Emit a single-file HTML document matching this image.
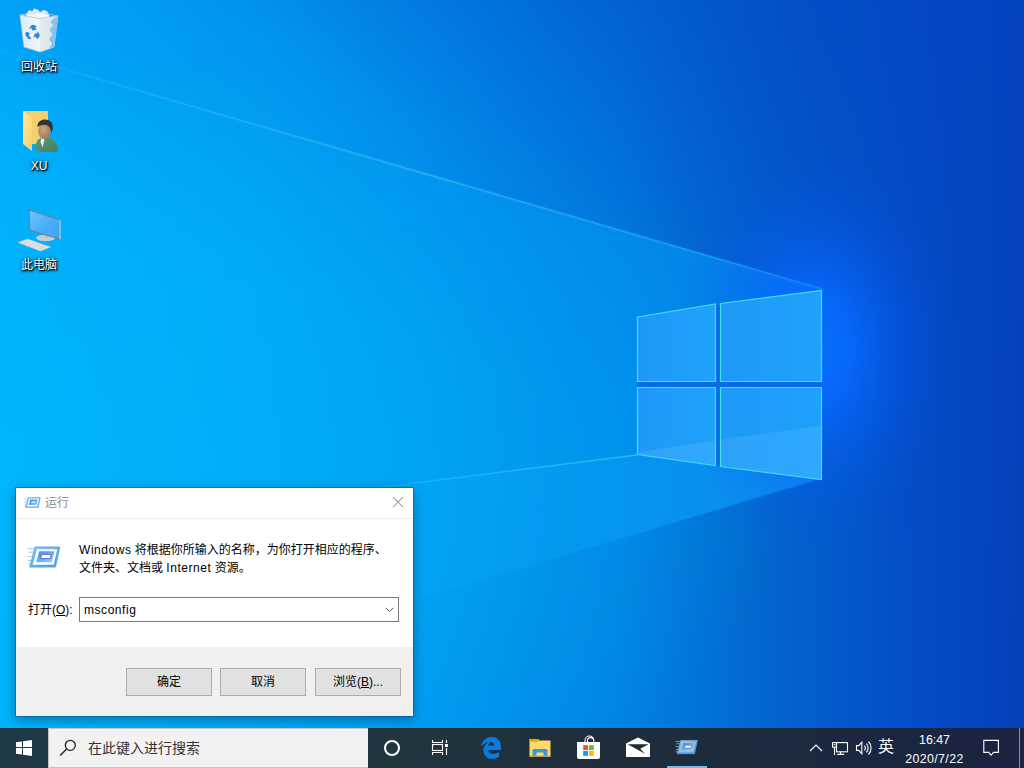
<!DOCTYPE html>
<html lang="zh-CN">
<head>
<meta charset="utf-8">
<title>桌面</title>
<style>
html,body{margin:0;padding:0;width:1024px;height:768px;overflow:hidden;background:#0078d7;}
body{position:relative;font-family:"Liberation Sans","Noto Sans CJK SC",sans-serif;font-size:12px;color:#000;}
#wall{position:absolute;left:0;top:0;width:1024px;height:768px;display:block;}
.dicon{position:absolute;left:2px;width:74px;text-align:center;color:#fff;font-size:12px;line-height:14px;text-shadow:1px 1px 0 rgba(0,0,0,.8),1px 1px 2px rgba(0,0,0,.9),0 1px 3px rgba(0,0,0,.7),0 0 4px rgba(0,0,0,.45);}
.dicon svg{display:block;margin:0 auto;}
.dicon span{display:block;}
/* dialog */
#dlg{position:absolute;left:16px;top:488px;width:397px;height:228px;background:#fff;box-shadow:0 0 0 1px rgba(0,80,150,.45),0 3px 11px rgba(0,0,0,.36);}
#dlg .title{position:absolute;left:0;top:0;width:100%;height:31px;border-bottom:1px solid #ececec;box-sizing:border-box;}
#dlg .title span{position:absolute;left:29px;top:7px;color:#8c8c8c;font-size:12px;line-height:16px;}
#dlg .foot{position:absolute;left:0;top:159px;width:100%;height:69px;background:#f0f0f0;}
.btn{position:absolute;top:180px;width:86px;height:28px;box-sizing:border-box;border:1px solid #adadad;background:#e1e1e1;text-align:center;line-height:27px;font-size:12px;}
#inp{position:absolute;left:63px;top:109px;width:320px;height:25px;box-sizing:border-box;border:1px solid #7a7a7a;background:#fff;}
#inp span{position:absolute;left:4px;top:4px;line-height:16px;font-size:12px;}
/* taskbar */
#tb{position:absolute;left:0;top:728px;width:1024px;height:40px;background:linear-gradient(90deg,#1e3846 0,#21363f 38%,#1f2e3a 58%,#1c2b3c 71%,#1b2740 83%,#1a2340 100%);}
#search{position:absolute;left:48px;top:0;width:320px;height:40px;background:#f2f2f2;box-sizing:border-box;border:1px solid #c4c4c4;border-right:none;}
#search span{position:absolute;left:39px;top:10px;font-size:14px;line-height:18px;color:#333;}
.lt{letter-spacing:.55px;}
.tray{color:#fff;position:absolute;}
</style>
</head>
<body>
<svg id="wall" viewBox="0 0 1024 768">
<defs>
<linearGradient id="g0" x1="0" y1="0" x2="1" y2="0">
<stop offset="0" stop-color="#00aafb"/>
<stop offset="0.25" stop-color="#00a1f5"/>
<stop offset="0.41" stop-color="#0096f0"/>
<stop offset="0.6" stop-color="#0084e4"/>
<stop offset="0.75" stop-color="#0365ce"/>
<stop offset="0.88" stop-color="#044ec8"/>
<stop offset="1" stop-color="#0440ba"/>
</linearGradient>
<linearGradient id="gtop" gradientUnits="userSpaceOnUse" x1="380" y1="330" x2="740" y2="-450">
<stop offset="0" stop-color="#0444c4" stop-opacity="0"/>
<stop offset="0.25" stop-color="#0444c4" stop-opacity="0.12"/>
<stop offset="0.5" stop-color="#0444c4" stop-opacity="0.5"/>
<stop offset="0.65" stop-color="#0444c4" stop-opacity="0.65"/>
<stop offset="1" stop-color="#0444c4" stop-opacity="0.7"/>
</linearGradient>
<linearGradient id="gtop2" gradientUnits="userSpaceOnUse" x1="300" y1="0" x2="1024" y2="0">
<stop offset="0" stop-color="#0444c4" stop-opacity="0"/>
<stop offset="0.414" stop-color="#0444c4" stop-opacity="0.13"/>
<stop offset="0.72" stop-color="#0444c4" stop-opacity="0.22"/>
<stop offset="0.79" stop-color="#0444c4" stop-opacity="0.08"/>
<stop offset="0.87" stop-color="#0444c4" stop-opacity="0.02"/>
<stop offset="1" stop-color="#0444c4" stop-opacity="0"/>
</linearGradient>
<linearGradient id="gcone" gradientUnits="userSpaceOnUse" x1="0" y1="0" x2="830" y2="0">
<stop offset="0" stop-color="#00b4ff" stop-opacity="0.06"/>
<stop offset="0.4" stop-color="#00a8fa" stop-opacity="0.14"/>
<stop offset="0.7" stop-color="#00a0f8" stop-opacity="0.32"/>
<stop offset="1" stop-color="#0a96ff" stop-opacity="0.72"/>
</linearGradient>
<radialGradient id="gleft" gradientUnits="userSpaceOnUse" cx="0" cy="470" r="1" gradientTransform="translate(0,470) scale(800,440) translate(0,-470)">
<stop offset="0" stop-color="#00c8ff" stop-opacity="0.40"/>
<stop offset="0.5" stop-color="#00c8ff" stop-opacity="0.27"/>
<stop offset="1" stop-color="#00c8ff" stop-opacity="0"/>
</radialGradient>
<linearGradient id="gfloor" gradientUnits="userSpaceOnUse" x1="100" y1="0" x2="830" y2="0">
<stop offset="0" stop-color="#10b0ff" stop-opacity="0.04"/>
<stop offset="0.6" stop-color="#10a8ff" stop-opacity="0.15"/>
<stop offset="1" stop-color="#20a0ff" stop-opacity="0.30"/>
</linearGradient>
<linearGradient id="gfline" gradientUnits="userSpaceOnUse" x1="200" y1="0" x2="640" y2="0">
<stop offset="0" stop-color="#50d0ff" stop-opacity="0"/>
<stop offset="1" stop-color="#50d8ff" stop-opacity="0.55"/>
</linearGradient>
<radialGradient id="gglow" gradientUnits="userSpaceOnUse" cx="812" cy="350" r="1" gradientTransform="translate(812,350) scale(140,200) translate(-812,-350)">
<stop offset="0" stop-color="#0a72ff" stop-opacity="0.95"/>
<stop offset="0.3" stop-color="#0668ff" stop-opacity="0.85"/>
<stop offset="0.55" stop-color="#0660f5" stop-opacity="0.45"/>
<stop offset="0.8" stop-color="#0658ee" stop-opacity="0.15"/>
<stop offset="1" stop-color="#0550e0" stop-opacity="0"/>
</radialGradient>
<linearGradient id="gline" gradientUnits="userSpaceOnUse" x1="0" y1="0" x2="822" y2="0"><stop offset="0" stop-color="#60c8ff" stop-opacity=".12"/><stop offset=".5" stop-color="#60c8ff" stop-opacity=".42"/><stop offset="1" stop-color="#50c0ff" stop-opacity=".22"/></linearGradient>
<linearGradient id="gpane" x1="0" y1="0" x2="1" y2="0">
<stop offset="0" stop-color="#1e98f6"/>
<stop offset="1" stop-color="#1ea2fc"/>
</linearGradient>
</defs>
<rect width="1024" height="768" fill="url(#g0)"/>
<rect width="1024" height="768" fill="url(#gtop)"/>
<rect width="1024" height="768" fill="url(#gleft)"/>
<polygon points="0,0 1024,0 1024,346 822,288 0,50" fill="url(#gtop2)"/>
<polygon points="0,50 822,288 822,478 0,724" fill="url(#gcone)"/>
<polygon points="0,535 637,455 822,479 0,724" fill="url(#gfloor)"/>
<line x1="200" y1="510" x2="637" y2="455" stroke="url(#gfline)" stroke-width="1.5"/>
<rect x="600" y="100" width="424" height="500" fill="url(#gglow)"/>
<line x1="0" y1="50.5" x2="822" y2="289" stroke="url(#gline)" stroke-width="3.5" opacity=".3"/>
<line x1="0" y1="50.5" x2="822" y2="289" stroke="url(#gline)" stroke-width="1.2"/>
<!-- logo -->
<polygon points="637,317 822,290 822,480 637,455" fill="#0a6ade" opacity=".9"/>
<g stroke="#3fe0f0" stroke-width="1.2" fill="url(#gpane)">
<polygon points="637.5,317 715.5,304 715.5,381.5 637.5,381.5"/>
<polygon points="720.5,303.5 821.5,290.5 821.5,381.5 720.5,381.5"/>
<polygon points="637.5,387.5 715.5,387.5 715.5,465.5 637.5,454.5"/>
<polygon points="720.5,387.5 821.5,387.5 821.5,479.5 720.5,466.5"/>
</g>
<polygon points="638,452 715,441 715,465 638,454.5" fill="#5cc0ff" opacity=".28"/>
<polygon points="721,439 821,426 821,479 721,466" fill="#5cc0ff" opacity=".25"/>
</svg>


<div class="dicon" style="top:8px;">
<svg width="44" height="46" viewBox="0 0 44 46">
<defs><linearGradient id="rb1" x1="0" y1="0" x2="1" y2="0"><stop offset="0" stop-color="#e9eef3"/><stop offset=".55" stop-color="#fbfcfd"/><stop offset="1" stop-color="#cfd9e2"/></linearGradient></defs>
<path d="M9,6.5 L12,2.5 L15.5,3.5 L17,0.8 L21,2 L23,4.5 L26.5,2.2 L30,3.5 L32.5,8 L31,11 L12,11 Z" fill="#f4f6f8" stroke="#d5dbe1" stroke-width=".6"/>
<path d="M3,7 L22,10.5 L41,8 L37,39 L23,44 L7,39 Z" fill="url(#rb1)" stroke="#c3ced8" stroke-width=".7" opacity=".96"/>
<path d="M22,10.5 L23,44 L37,39 L41,8 Z" fill="#dfe6ec" opacity=".75"/>
<path d="M41,8 L37,39 L32.5,40.6 L35,35.5 L32,31 L35.5,26.5 L32.5,22 L36,17.5 L33.5,13.5 L37,10.5 Z" fill="#49a6ec" opacity=".55"/>
<path d="M3,7 L22,4 L41,8 L22,10.5 Z" fill="none" stroke="#bcd0e0" stroke-width=".8"/>
<g fill="#2b86dc" transform="translate(-2.2,-1.5) scale(1.18)"><path d="M11.5,19 l3,-3.5 l4,.8 l-1.2,2 l1.6,1.2 l-4.2,.8 l-.5,-2 z"/><path d="M19.5,20.5 l1.8,4.2 l-2.4,3 l-1.2,-2 l-2,.6 l1.6,-3.8 l1.6,.6 z"/><path d="M9.5,21.5 l3.2,1 l-.9,1.7 l2.4,3.6 l-2.8,-.4 l-2.6,-3.4 z"/></g>
</svg><span style="margin-top:6px">回收站</span></div>

<div class="dicon" style="top:106px;">
<svg width="44" height="46" viewBox="0 0 44 46">
<defs><linearGradient id="fd1" x1="0" y1="0" x2="1" y2="1"><stop offset="0" stop-color="#ffe9a2"/><stop offset="1" stop-color="#f8d06a"/></linearGradient>
<radialGradient id="hd1" cx=".4" cy=".4" r=".7"><stop offset="0" stop-color="#c9a383"/><stop offset="1" stop-color="#9c7657"/></radialGradient>
<linearGradient id="bd1" x1="0" y1="0" x2="1" y2="1"><stop offset="0" stop-color="#5f9d74"/><stop offset="1" stop-color="#437c5c"/></linearGradient></defs>
<path d="M6,5 L31,5 L31,38 L14,38 Z" fill="#f3cf6e"/>
<path d="M6,5 L15,12.5 L15,45 L6,38 Z" fill="url(#fd1)"/>
<path d="M18,44 C18,35 22,31 28,31 C35,31 40,35 41,45 C34,47.5 24,47 18,44 Z" fill="url(#bd1)"/>
<path d="M24.5,32 l3,1.5 l-2,8 l-2,-6 z" fill="#eef3f6"/>
<ellipse cx="27.5" cy="25" rx="6.3" ry="8" fill="url(#hd1)"/>
<path d="M20.5,21 C20,14 27,12.5 31,14 C36,15.5 37,21 34.5,27 C34,23 32.5,20 29.5,19 C26,18.5 23,19 20.5,21 Z" fill="#33332f"/>
</svg><span style="margin-top:7px">XU</span></div>

<div class="dicon" style="top:206px;">
<svg width="50" height="46" viewBox="-3.5 0 50 46">
<defs><linearGradient id="pc1" x1="0" y1="0" x2="1" y2="1"><stop offset="0" stop-color="#74c6ff"/><stop offset=".5" stop-color="#4ab0fc"/><stop offset="1" stop-color="#38a4f8"/></linearGradient></defs>
<ellipse cx="28" cy="32" rx="9.5" ry="3.2" fill="#c9cdd1"/>
<path d="M27,27 l4,1 l0,4 l-4,-0.5 z" fill="#b8bcc0"/>
<path d="M12,4 L42,14 L42,33 L12,24 Z" fill="url(#pc1)" stroke="#7b7f84" stroke-width="1.2" stroke-linejoin="round"/>
<path d="M42,14 L43,14.5 L43,33.5 L42,33 Z" fill="#d9dcdf"/>
<path d="M0.5,36.5 L10,33 L33,41 L23,45 Z" fill="#e4e6e8" stroke="#c5c8cb" stroke-width=".6"/>
<g stroke="#c8cbce" stroke-width=".5"><line x1="3.5" y1="35.5" x2="26" y2="43.5"/><line x1="6.5" y1="34.5" x2="29" y2="42.5"/><line x1="5" y1="38" x2="13" y2="34.5"/><line x1="10" y1="40" x2="18" y2="36"/><line x1="15" y1="42" x2="23" y2="38"/><line x1="20" y1="43.5" x2="28" y2="39.5"/></g>
</svg><span style="margin-top:6px">此电脑</span></div>

<svg width="0" height="0" style="position:absolute">
<defs>
<linearGradient id="ri1" x1="0" y1="0" x2="1" y2="1"><stop offset="0" stop-color="#8fcaf6"/><stop offset="1" stop-color="#3d94e2"/></linearGradient>
<linearGradient id="ri2" x1="0" y1="0" x2="1" y2="1"><stop offset="0" stop-color="#2f8ee6"/><stop offset="1" stop-color="#9ad2f8"/></linearGradient>
<symbol id="runico" viewBox="0 0 32 22">
<g stroke="#9fd0f5" stroke-width="1.1" stroke-linecap="round" opacity=".85"><line x1="0.5" y1="2.5" x2="7" y2="2.5"/><line x1="1.5" y1="6" x2="6" y2="6"/><line x1="0.5" y1="10" x2="5" y2="10"/><line x1="1" y1="14" x2="4" y2="14"/><line x1="0.5" y1="17.5" x2="3" y2="17.5"/></g>
<polygon points="7.5,1 31,1 27,20 2.5,20" fill="url(#ri1)" stroke="#5aa9ea" stroke-width="1" stroke-linejoin="round"/>
<polygon points="9.3,3 28.6,3 25.4,18 5.2,18" style="fill:var(--band,#fff)"/>
<polygon points="11.5,5 26,5 23.6,15.5 8.6,15.5" fill="url(#ri2)"/>
<polygon points="14,8 23,8 22,12 12.8,12" fill="#fff" stroke="#5a66c4" stroke-width="0.9"/>
</symbol>
</defs>
</svg>
<div id="dlg">
 <div class="title"><svg style="position:absolute;left:7.5px;top:8.6px" width="17" height="11.5"><use href="#runico" width="17" height="11.5"/></svg><span>运行</span>
 <svg style="position:absolute;left:376px;top:8px" width="12" height="12" viewBox="0 0 12 12"><path d="M1,1 L11,11 M11,1 L1,11" stroke="#8f8f8f" stroke-width="1.05" fill="none"/></svg></div>
 <svg style="position:absolute;left:11px;top:58px" width="34" height="23"><use href="#runico" width="34" height="23"/></svg>
 <div style="position:absolute;left:63px;top:53px;line-height:18px;font-size:12px;white-space:nowrap;"><span class="lt">Windows</span> 将根据你所输入的名称，为你打开相应的程序、<br>文件夹、文档或 <span class="lt">Internet</span> 资源。</div>
 <div style="position:absolute;left:12px;top:114px;line-height:16px;">打开(<u>O</u>):</div>
 <div id="inp"><span class="lt">msconfig</span><svg style="position:absolute;right:4px;top:9px" width="9" height="6" viewBox="0 0 9 6"><path d="M0.8,0.8 L4.5,4.6 L8.2,0.8" stroke="#555" stroke-width="1" fill="none"/></svg></div>
 <div class="foot"></div>
 <div class="btn" style="left:110px;">确定</div>
 <div class="btn" style="left:204px;">取消</div>
 <div class="btn" style="left:299px;">浏览(<u>B</u>)...</div>
</div>

<div id="tb">
 <svg style="position:absolute;left:16px;top:12px" width="16" height="16" viewBox="0 0 16 16"><path d="M0,2.3 L6,1.45 V7 H0 Z M7,1.3 L16,0 V7 H7 Z M0,8 H6 V14.55 L0,13.7 Z M7,8 H16 V16 L7,14.7 Z" fill="#fff"/></svg>
 <div id="search"><svg style="position:absolute;left:10px;top:9px" width="20" height="20" viewBox="0 0 20 20"><circle cx="11.3" cy="7.3" r="5" fill="none" stroke="#222" stroke-width="1.3"/><line x1="7.6" y1="11" x2="1.2" y2="17.6" stroke="#222" stroke-width="1.4"/></svg><span>在此键入进行搜索</span></div>
 <svg style="position:absolute;left:368px;top:0" width="360" height="40" viewBox="368 0 360 40">
  <circle cx="392" cy="20" r="7" fill="none" stroke="#fff" stroke-width="2"/>
  <g fill="none" stroke="#fff" stroke-width="1.1"><rect x="432.5" y="16.5" width="10" height="6"/><path d="M432.5,12 V14.5 H442.5 V12 M432.5,27 V24.5 H442.5 V27 M446.5,12 V15 M446.5,20 V27"/></g><rect x="445" y="16" width="3" height="3" fill="#fff"/>
  <!-- edge -->
  <path fill-rule="evenodd" d="M481,18.6 C481.6,14.5 484.5,9.4 491.3,9 C497.5,8.8 501.2,13.5 501,18.5 L501,21.9 L488.1,22.2 C488.3,24.3 490,25.8 493.5,25.8 C495.6,25.8 497.4,25.2 498.9,24 L498.9,29 C497,30.2 494.8,30.9 492,30.9 C486.5,30.9 483.2,26.5 483.3,21.5 C483.4,19.5 485,16.2 488.4,14.4 C485.8,14.2 483,16 481,18.6 Z M488.2,17.6 L494.4,17.6 C494.4,15.6 493.3,14.3 491.4,14.3 C489.6,14.3 488.5,15.7 488.2,17.6 Z" fill="#0a7adf"/>
  <!-- explorer -->
  <path d="M529.5,11 H538 L539.5,12.5 H550.5 V28.5 H529.5 Z" fill="#ffd969"/><path d="M529.5,11 H538 L539.2,12.6 L537.5,13.8 H529.5 Z" fill="#e9a800"/>
  <path d="M532.5,28.5 V22.5 Q532.5,21 534,21 H546 Q547.5,21 547.5,22.5 V28.5 H543.5 V24.5 H536.5 V28.5 Z" fill="#3c97e2"/><rect x="529.5" y="27.6" width="21" height=".9" fill="#e0b040"/>
  <!-- store -->
  <path d="M577,14 H600 V29 Q600,31 598,31 H579 Q577,31 577,29 Z" fill="#fff"/><path d="M585,14 V12.4 a4.4,4.4 0 0 1 8.8,0 V14 M587.4,14 V12.8 a3.2,3.2 0 0 1 6.4,0" fill="none" stroke="#fff" stroke-width="1.1"/>
  <rect x="583.2" y="17.2" width="4.8" height="4.8" fill="#f25022"/><rect x="589" y="17.2" width="4.8" height="4.8" fill="#7fba00"/><rect x="583.2" y="23" width="4.8" height="4.8" fill="#00a4ef"/><rect x="589" y="23" width="4.8" height="4.8" fill="#ffb900"/>
  <!-- mail -->
  <path d="M626,15.6 L638,9.6 L650,15.6 V29 H626 Z" fill="#fff"/><path d="M627.6,16.3 H648.6 L640.2,20.8 L645,25.8 L627.6,16.3 Z" fill="#1e2c3a"/>
  <!-- run -->
  <use href="#runico" x="675" y="11.6" width="23.5" height="15.5" style="--band:#a9bccd"/>
  <rect x="667" y="38" width="40" height="2" fill="#76b9ed"/>
 </svg>
 <svg style="position:absolute;left:800px;top:0" width="224" height="40" viewBox="800 0 224 40">
  <path d="M810,23 L816,17 L822,23" fill="none" stroke="#fff" stroke-width="1.2"/>
  <g fill="none" stroke="#fff" stroke-width="1.1"><rect x="836.5" y="14.6" width="11" height="9.2"/><path d="M840.5,23.8 V26.4 M837.2,26.4 H844.2"/><rect x="832.6" y="14.6" width="3.9" height="4.6"/><path d="M834.5,19.2 V27 M833.6,16.8 H835.4"/></g>
  <g fill="none" stroke="#fff" stroke-width="1.1"><path d="M856.5,17.6 H858.8 L861.8,14.2 V25.8 L858.8,22.4 H856.5 Z"/><path d="M864.3,17.6 a3.4,3.4 0 0 1 0,4.8 M866.3,15.6 a6.2,6.2 0 0 1 0,8.8 M868.4,13.5 a9.2,9.2 0 0 1 0,13"/></g>
  <line x1="1019.5" y1="0" x2="1019.5" y2="40" stroke="#8a909c" stroke-width="1"/>
  <path d="M983.8,12.4 H998.4 V24.4 H993.6 L991.1,27.2 L988.6,24.4 H983.8 Z" fill="none" stroke="#fff" stroke-width="1.1"/>
 </svg>
 <div class="tray" style="left:876px;top:9px;width:20px;text-align:center;font-size:16px;line-height:20px;">英</div>
 <div class="tray" style="left:900px;top:3px;width:69px;text-align:center;font-size:12.4px;line-height:19px;">16:47<br><span style="letter-spacing:.35px">2020/7/22</span></div>
</div>
</body>
</html>
